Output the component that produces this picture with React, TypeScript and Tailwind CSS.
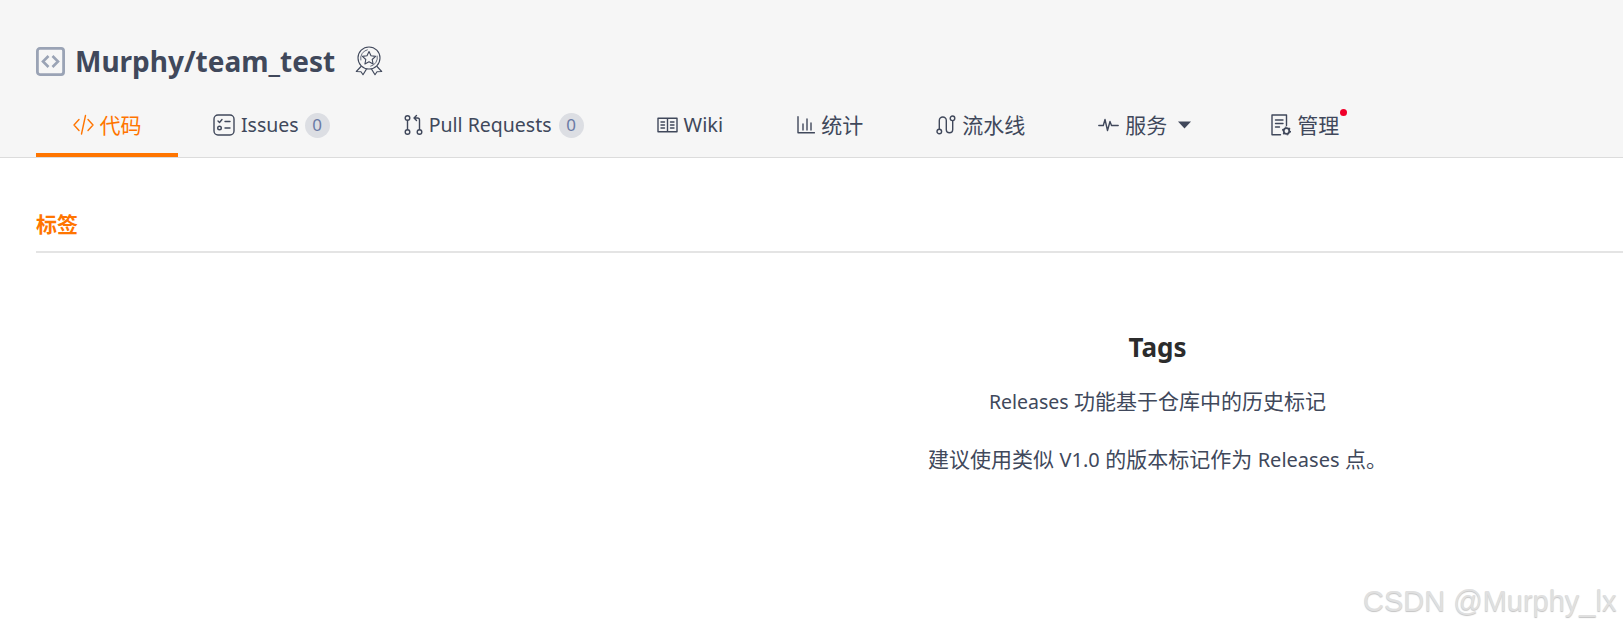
import React from "react";

function Tab({ icon, label, labelSize = "text-[21px]", badge, badgeGap = "ml-[7px]", active, extra, dot, className }: { icon: React.ReactNode; label: string; labelSize?: string; badge?: string; badgeGap?: string; active?: boolean; extra?: React.ReactNode; dot?: boolean; className?: string }) {
  return (
    <div className={`relative flex h-[62px] items-center border-b-[4px] px-[36.5px] pt-[2px] ${active ? "border-[#ff7500] text-[#ff7500]" : "border-transparent text-[#40485b]"} ${className ?? ""}`}>
      <span className="mr-[6px] flex items-center">{icon}</span>
      <span className={`whitespace-nowrap leading-[28px] ${labelSize}`}>{label}</span>
      {badge && (
        <span className={`${badgeGap} flex h-[25px] w-[25px] items-center justify-center rounded-full bg-[#dcdee3] text-[17px] text-[#6a7aa5]`}>{badge}</span>
      )}
      {extra}
      {dot && <span className="absolute right-[29px] top-[14px] h-[7px] w-[7px] rounded-full bg-[#f0002a]" />}
    </div>
  );
}

const stroke = { fill: "none", stroke: "currentColor", strokeWidth: 1.4, strokeLinecap: "round" as const, strokeLinejoin: "round" as const };

export default function App() {
  return (
    <div className="relative h-[630px] w-[1623px] overflow-hidden bg-white font-['Noto_Sans','Noto_Sans_CJK_SC',sans-serif]">
      <div className="h-[158px] border-b border-[#dcdcdc] bg-[#f6f6f6] pl-[36px] pt-[43px]">
        <div className="flex h-[36px] items-center">
          <svg width="29" height="29" viewBox="0 0 29 29" className="mr-[10px] text-[#9aa3b5]">
            <rect x="1.400" y="1.400" width="26.200" height="26.200" rx="2.500" fill="none" stroke="currentColor" strokeWidth="2.800" />
            <path d="M12.500 9l-5.500 5.500 5.500 5.500M16.500 9l5.500 5.500-5.500 5.500" fill="none" stroke="currentColor" strokeWidth="2.600" />
          </svg>
          <span className="text-[28px] font-bold leading-[36px] text-[#40485b]">Murphy/team_test</span>
          <svg width="28" height="30" viewBox="0 0 28 30" className="ml-[20px] text-[#40485b]" {...stroke} strokeWidth={1.1}>
            <circle cx="14" cy="12" r="11" />
            <path d="M5.800 14a8.500 8.500 0 0 1 6.500-10.200M22.200 10a8.500 8.500 0 0 1-6.500 10.200" strokeWidth={0.8} />
            <path d="M14 5.500l2 4.300 4.600.6-3.400 3.100.9 4.500-4.100-2.300-4.100 2.300.9-4.500-3.400-3.100 4.600-.6z" />
            <path d="M6 20.500l-4.700 5 4.700.2 2 3 3.300-5.300M22 20.500l4.700 5-4.700.2-2 3-3.300-5.300" />
          </svg>
        </div>
        <div className="mt-[16px] flex">
          <Tab
            active
            label="代码"
            icon={
              <svg width="21" height="22" viewBox="0 0 21 22" {...stroke}>
                <path d="M6 5.500L1 11l5 5.500M15 5.500L20 11l-5 5.500M12.500 1.500L8.500 20" />
              </svg>
            }
          />
          <Tab
            className="-ml-[1.5px]"
            label="Issues"
            labelSize="text-[19.5px]"
            badge="0"
            badgeGap="ml-[6px]"
            icon={
              <svg width="22" height="22" viewBox="0 0 22 22" {...stroke}>
                <rect x="1" y="1" width="20" height="20" rx="4" />
                <path d="M5 7l1.500 1.500L9 5.500M12 7.500h5M12 14h5" />
                <circle cx="6.500" cy="14" r="1.800" />
              </svg>
            }
          />
          <Tab
            className="ml-[1px]"
            label="Pull Requests"
            labelSize="text-[19.5px]"
            badge="0"
            icon={
              <svg width="19" height="22" viewBox="0 0 19 22" {...stroke}>
                <circle cx="3.500" cy="4" r="2.300" />
                <circle cx="3.500" cy="18" r="2.300" />
                <circle cx="15.500" cy="18" r="2.300" />
                <path d="M3.500 6.500v9M15.500 15.500V6a2 2 0 0 0-2-2H10M12.500 1.500L10 4l2.500 2.500" />
              </svg>
            }
          />
          <Tab
            label="Wiki"
            labelSize="text-[20px]"
            icon={
              <svg width="21" height="16" viewBox="0 0 21 16" {...stroke}>
                <path d="M1 1.200h19v13.600H1zM10.500 1.200v13.600M4 5h3.500M4 8h3.500M4 11h3.500M13.500 5H17M13.500 8H17M13.500 11H17" />
              </svg>
            }
          />
          <Tab
            className="ml-[1px]"
            label="统计"
            icon={
              <svg width="18" height="18" viewBox="0 0 18 18" {...stroke}>
                <path d="M1 .8v16h16.500M6 8v6M10 3v11M14 7v7" />
              </svg>
            }
          />
          <Tab
            label="流水线"
            icon={
              <svg width="20" height="20" viewBox="0 0 20 20" {...stroke}>
                <circle cx="3.300" cy="16.500" r="2.300" />
                <circle cx="16.500" cy="3.300" r="2.300" />
                <path d="M3.300 14V5.500a3.500 3.500 0 0 1 7 0v9a3.200 3.200 0 0 0 6.400 0V5.700" />
              </svg>
            }
          />
          <Tab
            label="服务"
            icon={
              <svg width="21" height="14" viewBox="0 0 21 14" {...stroke}>
                <path d="M.8 7.500h4.500L7 1.500l2.500 11 2.500-9 1.500 4h6.700" />
              </svg>
            }
            extra={
              <svg width="13" height="8" viewBox="0 0 13 8" className="ml-[11px] mr-[7px]">
                <path d="M0 .5h13L6.500 7.500z" fill="currentColor" />
              </svg>
            }
          />
          <Tab
            dot
            label="管理"
            icon={
              <svg width="20" height="22" viewBox="0 0 20 22" {...stroke}>
                <path d="M9.500 20.800H1V1h14.500v10.500M4.500 6h7.500M4.500 9.500h7.500M4.500 13h4" />
                <circle cx="15.500" cy="17" r="2.800" fill="none" strokeWidth={1.8} />
                <circle cx="15.500" cy="17" r="4" fill="none" strokeWidth={1.2} strokeDasharray="1.600 2.600" strokeLinecap="butt" />
              </svg>
            }
          />
        </div>
      </div>
      <div className="w-[2279px] pl-[36px]">
        <div className="flex h-[95px] items-end border-b-2 border-[#e4e4e4] pb-[13px] text-[21px] font-bold leading-[28px] text-[#ff7500]">
          <span>标签</span>
        </div>
        <div className="flex flex-col items-center pt-[75px] text-center text-[21px] text-[#40485b]">
          <div className="text-[26px] font-bold leading-[38px] text-[#2c2c2c]">Tags</div>
          <p className="mt-[21px] leading-[28px]"><span className="text-[19.5px]">Releases</span> 功能基于仓库中的历史标记</p>
          <p className="mt-[29px] leading-[28px]">建议使用类似 <span className="text-[20px]">V1.0</span> 的版本标记作为 <span className="text-[20px]">Releases</span> 点。</p>
        </div>
      </div>
      <div className="absolute left-[1363px] top-[581px] text-[29px] leading-[40px] text-[#e0e0e0] [font-family:'Liberation_Sans',sans-serif] [text-shadow:0_1px_1px_#c4c4c4]">
        CSDN @Murphy_lx
      </div>
    </div>
  );
}
